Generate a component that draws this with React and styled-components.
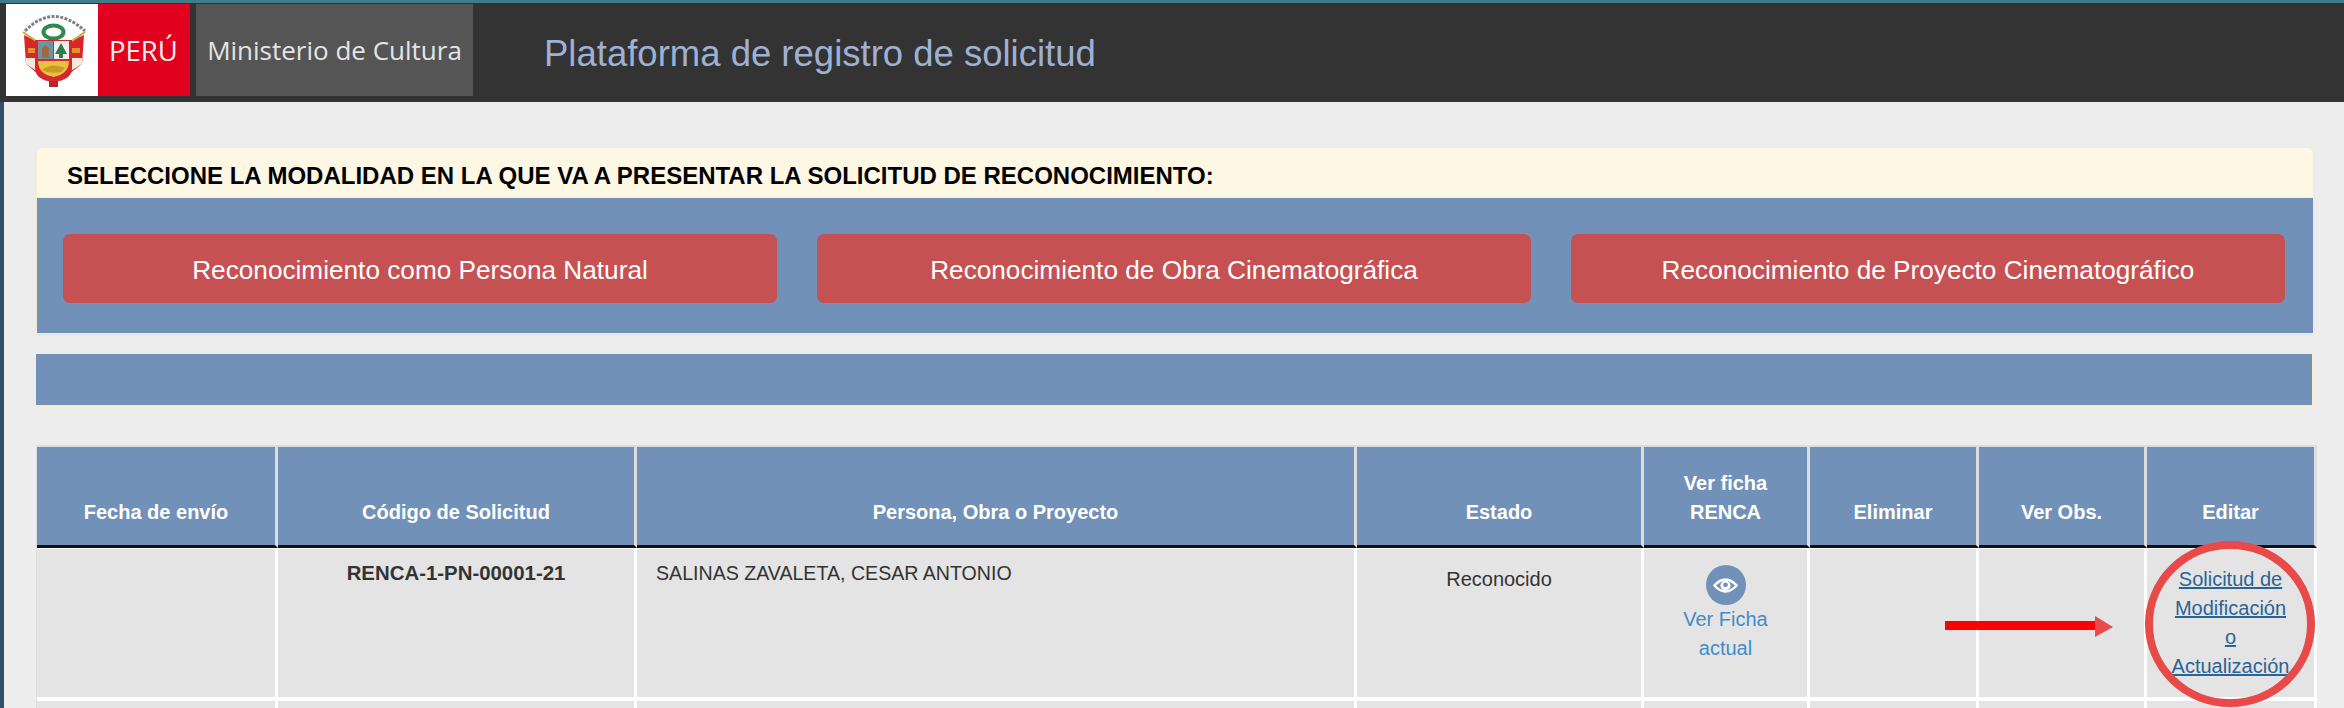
import styled, { createGlobalStyle } from "styled-components";

const blue = "#7291b9";
const cream = "#faebcc";

const GlobalStyle = createGlobalStyle`
    html, body {
        margin: 0;
        padding: 0;
        height: 708px;
        overflow: hidden;
        background: #ededed;
    }
    * {
        box-sizing: border-box;
    }
`;

const columns = [241, 359, 720, 287, 166, 169, 168, 170];

export default function App() {
    return (
        <Page>
            <GlobalStyle />
            <Navbar>
                <Logo>
                    <Emblem />
                    <Peru>PERÚ</Peru>
                </Logo>
                <Ministry>Ministerio de Cultura</Ministry>
                <Title>Plataforma de registro de solicitud</Title>
            </Navbar>
            <Main>
                <Panel>
                    <PanelHeading>SELECCIONE LA MODALIDAD EN LA QUE VA A PRESENTAR LA SOLICITUD DE RECONOCIMIENTO:</PanelHeading>
                    <PanelBody>
                        <RedButton>Reconocimiento como Persona Natural</RedButton>
                        <RedButton>Reconocimiento de Obra Cinematográfica</RedButton>
                        <RedButton>Reconocimiento de Proyecto Cinematográfico</RedButton>
                    </PanelBody>
                </Panel>
                <EmptyBar />
                <Table>
                    <colgroup>
                        {columns.map((width, i) => <col key={i} style={{ width }} />)}
                    </colgroup>
                    <thead>
                        <tr>
                            <Th>Fecha de envío</Th>
                            <Th>Código de Solicitud</Th>
                            <Th>Persona, Obra o Proyecto</Th>
                            <Th>Estado</Th>
                            <Th>Ver ficha<br />RENCA</Th>
                            <Th>Eliminar</Th>
                            <Th>Ver Obs.</Th>
                            <Th>Editar</Th>
                        </tr>
                    </thead>
                    <tbody>
                        <tr>
                            <Td />
                            <CodeCell>RENCA-1-PN-00001-21</CodeCell>
                            <NameCell>SALINAS ZAVALETA, CESAR ANTONIO</NameCell>
                            <Td $center $low>Reconocido</Td>
                            <Td $center>
                                <EyeBadge><EyeIcon /></EyeBadge>
                                <FichaLink>Ver Ficha<br />actual</FichaLink>
                            </Td>
                            <Td />
                            <Td />
                            <Td $center $low>
                                <EditLink>Solicitud de<br />Modificación<br />o<br />Actualización</EditLink>
                            </Td>
                        </tr>
                        <tr>
                            {columns.map((width, i) => <Td key={i} />)}
                        </tr>
                    </tbody>
                </Table>
            </Main>
            <Arrow viewBox="0 0 168 21">
                <rect x="0" y="5" width="150" height="9" fill="#ff0000" />
                <polygon points="150,0 168,11 150,21" fill="#e94b4b" />
            </Arrow>
            <Ring viewBox="0 0 170 166">
                <ellipse cx="85" cy="83" rx="81" ry="79" fill="none" stroke="#e84a4a" strokeWidth="8" />
            </Ring>
        </Page>
    );
}

function Emblem() {
    return (
        <EmblemSvg viewBox="0 0 70 84">
            <path d="M5 23 Q33 -6 65 23" fill="none" stroke="#7f7f7f" strokeWidth="3" strokeDasharray="3 1.4" />
            <ellipse cx="33.5" cy="24" rx="10" ry="6.5" fill="none" stroke="#2e8b4e" strokeWidth="4" />
            <path d="M4 27 L18 34 L18 66 L6 56 Z" fill="#d8262c" />
            <path d="M64 27 L49 34 L49 66 L62 56 Z" fill="#d8262c" />
            <path d="M3 24 L16 33 M65 24 L52 33" stroke="#c9a93a" strokeWidth="2" />
            <path d="M6 50 L18 50 L18 64 L6 56 Z M62 50 L49 50 L49 64 L62 56 Z" fill="#f4e8d8" />
            <path d="M8 40 H16 V45 H8 Z M52 40 H60 V45 H52 Z" fill="#e0912f" />
            <path d="M15 32 H52 V60 Q52 72 33.5 74 Q15 72 15 60 Z" fill="#d8262c" />
            <rect x="18" y="33" width="15" height="18" fill="#6d93a8" />
            <rect x="34" y="33" width="15" height="18" fill="#f1f1ea" />
            <path d="M22 50 V40 L25.5 37 L29 40 V50 Z" fill="#9a6b3c" />
            <path d="M41 35 L47 46 L43 46 L43 50 L39 50 L39 46 L35 46 Z" fill="#2f7d4e" />
            <path d="M18 53 H49 Q49 66 33.5 69 Q18 66 18 53 Z" fill="#e8c23c" />
            <path d="M22 62 Q32 54 45 60 L41 64 Q30 66 22 62 Z" fill="#c99a26" />
            <rect x="29" y="73" width="9" height="6" fill="#b3262c" />
        </EmblemSvg>
    );
}

function EyeIcon() {
    return (
        <svg viewBox="0 0 25 17" width="25" height="17">
            <path d="M1.4 8.5 Q12.5 -3.5 23.6 8.5 Q12.5 20.5 1.4 8.5 Z" fill="none" stroke="#fff" strokeWidth="2.4" />
            <circle cx="12.5" cy="8.5" r="5" fill="#fff" />
            <circle cx="12.5" cy="7.8" r="2.4" fill={blue} />
        </svg>
    );
}

const Page = styled.div`
    position: relative;
    height: 708px;
    overflow: hidden;
    font-family: "Liberation Sans", Arial, sans-serif;
`;

const Navbar = styled.header`
    height: 102px;
    padding: 1px 0 6px 6px;
    display: flex;
    align-items: center;
    gap: 6px;
    background: #333333;
    border-top: 3px solid #3f7c85;
`;

const Logo = styled.div`
    width: 184px;
    height: 92px;
    display: flex;
    background: linear-gradient(to right, #ffffff 50%, #e2001f 50%);
`;

const EmblemSvg = styled.svg`
    width: 70px;
    height: 84px;
    margin: 4px 0 0 14px;
    flex: none;
    filter: blur(0.5px);
`;

const Peru = styled.span`
    margin-left: 19px;
    align-self: center;
    font-family: "Open Sans", sans-serif;
    font-size: 27.5px;
    color: #fdeef0;
`;

const Ministry = styled.div`
    width: 277px;
    height: 92px;
    display: flex;
    align-items: center;
    justify-content: center;
    background: #555555;
    color: #e4e4e4;
    font-family: "Open Sans", sans-serif;
    font-size: 26px;
`;

const Title = styled.h1`
    margin: 8px 0 0 65px;
    font-size: 36.5px;
    font-weight: 400;
    color: #9fb1d3;
`;

const Main = styled.main`
    padding: 45px 30px 0 32px;
    background: #ededed;
    border-left: 4px solid #344e6c;
`;

const Panel = styled.section`
    border: 1px solid ${cream};
    border-radius: 6px 6px 2px 2px;
    box-shadow: 0 1px 2px rgba(0, 0, 0, 0.05);
`;

const PanelHeading = styled.h2`
    margin: 0;
    height: 50px;
    padding: 6px 0 0 30px;
    display: flex;
    align-items: center;
    background: #fdf7e3;
    border-radius: 5px 5px 0 0;
    border-bottom: 1px solid ${cream};
    font-size: 24px;
    font-weight: 700;
    color: #000000;
`;

const PanelBody = styled.div`
    height: 135px;
    padding: 36px 28px 0 26px;
    display: grid;
    grid-template-columns: repeat(3, 714px);
    justify-content: space-between;
    align-items: start;
    background: ${blue};
`;

const RedButton = styled.button`
    height: 69px;
    padding: 3px 0 0;
    border: none;
    border-radius: 7px;
    background: #c65153;
    color: #ffffff;
    font-family: inherit;
    font-size: 26.2px;
`;

const EmptyBar = styled.div`
    height: 53px;
    margin-top: 20px;
    background: ${blue};
    border-right: 2px solid ${cream};
    border-bottom: 2px solid ${cream};
`;

const Table = styled.table`
    width: 2281px;
    margin-top: 38px;
    table-layout: fixed;
    border-collapse: separate;
    border-spacing: 0;
    border-top: 2px solid #dddddd;
    border-left: 1px solid #dddddd;
    color: #333333;
    font-size: 20px;
    line-height: 29px;
`;

const Th = styled.th`
    height: 101px;
    padding: 0 8px 18px;
    vertical-align: bottom;
    background: ${blue};
    color: #ffffff;
    font-weight: 700;
    text-align: center;
    border-right: 3px solid #dddddd;
    border-bottom: 3px solid #111111;
`;

const Td = styled.td`
    height: 152px;
    padding: ${props => props.$low ? "16px" : "10px"} 8px 0;
    vertical-align: top;
    background: #e4e4e4;
    text-align: ${props => props.$center ? "center" : "left"};
    border-top: 1px solid #ffffff;
    border-right: 3px solid #ffffff;
    border-bottom: 3px solid #ffffff;
`;

const CodeCell = styled(Td)`
    text-align: center;
    font-size: 20.4px;
    font-weight: 700;
`;

const NameCell = styled(Td)`
    padding-left: 19px;
    font-size: 19.6px;
`;

const EyeBadge = styled.div`
    width: 40px;
    height: 40px;
    margin: 6px auto 0;
    display: flex;
    align-items: center;
    justify-content: center;
    border-radius: 50%;
    background: ${blue};
`;

const FichaLink = styled.div`
    color: #428bca;
`;

const EditLink = styled.a`
    color: #2a6496;
    text-decoration: underline;
`;

const Arrow = styled.svg`
    position: absolute;
    left: 1945px;
    top: 616px;
    width: 168px;
    height: 21px;
`;

const Ring = styled.svg`
    position: absolute;
    left: 2145px;
    top: 541px;
    width: 170px;
    height: 166px;
`;
